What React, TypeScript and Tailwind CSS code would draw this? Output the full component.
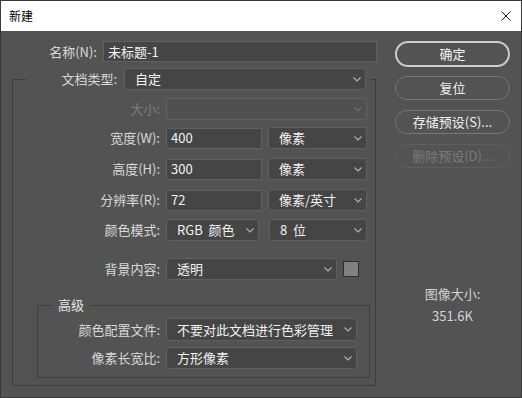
import React from "react"

const font = { fontFamily: '"Noto Sans CJK SC", "Noto Sans", sans-serif' }

function Chevron({ dim = false }: { dim?: boolean }) {
  return (
    <svg width="8" height="5" viewBox="0 0 8 5" className="shrink-0">
      <polyline
        points="0.5,0.5 4,4 7.5,0.5"
        fill="none"
        stroke={dim ? "#6c6c6c" : "#b4b4b4"}
        strokeWidth="1.1"
      />
    </svg>
  )
}

function Select({
  value,
  className,
  disabled = false,
}: {
  value?: string
  className: string
  disabled?: boolean
}) {
  return (
    <div
      className={
        "flex items-center justify-between rounded-[3px] border pl-[10px] pr-[4px] text-[13px] leading-4 " +
        (disabled ? "border-[#626262] bg-[#505050] " : "border-[#5f5f5f] bg-[#454545] text-[#f2f2f2] ") +
        className
      }
    >
      <span className="whitespace-pre">{value}</span>
      <Chevron dim={disabled} />
    </div>
  )
}

function Input({ value, className }: { value: string; className: string }) {
  return (
    <div
      className={
        "flex items-center border border-[#616161] bg-[#454545] pl-[4px] text-[13px] leading-4 text-[#f2f2f2] " +
        className
      }
    >
      {value}
    </div>
  )
}

function Label({ text, className, disabled = false }: { text: string; className: string; disabled?: boolean }) {
  return (
    <div
      className={
        "shrink-0 text-right text-[13px] leading-4 " +
        (disabled ? "text-[#7d7d7d] " : "text-[#d9d9d9] ") +
        className
      }
    >
      {text}
    </div>
  )
}

export default function App() {
  return (
    <div style={font} className="flex h-[398px] w-[522px] flex-col border border-[#3a3a3a]">
      {/* Title bar */}
      <div className="flex h-[30px] shrink-0 items-center justify-between bg-white pl-[8px] pr-[10px]">
        <span className="text-[12px] leading-4 text-black">新建</span>
        <svg width="10" height="10" viewBox="0 0 10 10">
          <path d="M0.5 0.5 L9.5 9.5 M9.5 0.5 L0.5 9.5" stroke="#111" strokeWidth="1" />
        </svg>
      </div>

      {/* Body */}
      <div className="flex flex-1 bg-[#535353]">
        {/* Left column */}
        <div className="flex w-[376px] shrink-0 flex-col">
          <div className="mt-[10px] flex items-center gap-[6px]">
            <Label text="名称(N):" className="w-[96px]" />
            <Input value="未标题-1" className="h-[21px] w-[274px]" />
          </div>

          <fieldset className="ml-[11px] mt-[6px] w-[364px] border border-[#3d3d3d] pb-[7px]">
            <legend className="ml-[13px] pr-[5px]">
              <div className="flex items-center gap-[7px]">
                <Label text="文档类型:" className="w-[91px]" />
                <Select value="自定" className="h-[22px] w-[242px]" />
              </div>
            </legend>

            <div className="mt-[8px] flex items-center gap-[6px]">
              <Label text="大小:" className="w-[147px]" disabled />
              <Select className="h-[22px] w-[201px]" disabled />
            </div>

            <div className="mt-[7px] flex items-center gap-[6px]">
              <Label text="宽度(W):" className="w-[147px]" />
              <Input value="400" className="h-[21px] w-[96px]" />
              <Select value="像素" className="h-[22px] w-[99px]" />
            </div>

            <div className="mt-[9px] flex items-center gap-[6px]">
              <Label text="高度(H):" className="w-[147px]" />
              <Input value="300" className="h-[21px] w-[96px]" />
              <Select value="像素" className="h-[22px] w-[99px]" />
            </div>

            <div className="mt-[9px] flex items-center gap-[6px]">
              <Label text="分辨率(R):" className="w-[147px]" />
              <Input value="72" className="h-[21px] w-[96px]" />
              <Select value="像素/英寸" className="h-[22px] w-[99px]" />
            </div>

            <div className="mt-[8px] flex items-center">
              <Label text="颜色模式:" className="w-[147px]" />
              <Select value="RGB  颜色" className="ml-[6px] h-[22px] w-[93px]" />
              <Select value="8  位" className="ml-[10px] h-[22px] w-[98px]" />
            </div>

            <div className="mt-[17px] flex items-center gap-[6px]">
              <Label text="背景内容:" className="w-[147px]" />
              <Select value="透明" className="h-[22px] w-[171px]" />
              <div className="h-[16px] w-[16px] border border-[#2e2e2e] bg-[#808080]" />
            </div>

            <fieldset className="ml-[24px] mt-[17px] w-[333px] border border-[#3d3d3d] pb-[8px]">
              <legend className="ml-[14px] px-[6px] text-[13px] leading-4 text-[#e6e6e6]">高级</legend>
              <div className="mt-[5px] flex items-center gap-[6px]">
                <Label text="颜色配置文件:" className="w-[122px]" />
                <Select value="不要对此文档进行色彩管理" className="h-[23px] w-[191px]" />
              </div>
              <div className="mt-[6px] flex items-center gap-[6px]">
                <Label text="像素长宽比:" className="w-[122px]" />
                <Select value="方形像素" className="h-[22px] w-[191px]" />
              </div>
            </fieldset>
          </fieldset>
        </div>

        {/* Right column */}
        <div className="ml-[18px] flex w-[115px] flex-col pt-[10px] text-[13px] leading-4">
          <button className="h-[26px] rounded-full border-2 border-[#cdcdcd] text-[#f5f5f5]">确定</button>
          <button className="mt-[9px] h-[24px] rounded-full border-[1.5px] border-[#767676] text-[#f0f0f0]">
            复位
          </button>
          <button className="mt-[10px] h-[24px] rounded-full border-[1.5px] border-[#767676] text-[#f0f0f0]">
            存储预设(S)...
          </button>
          <button className="mt-[10px] h-[24px] rounded-full border-[1.5px] border-[#5e5e5e] text-[#7a7a7a]">
            删除预设(D)...
          </button>
          <div className="mt-[118px] text-center text-[#d2d2d2]">图像大小:</div>
          <div className="mt-[6px] text-center text-[#cfd6de]">351.6K</div>
        </div>
      </div>
    </div>
  )
}
